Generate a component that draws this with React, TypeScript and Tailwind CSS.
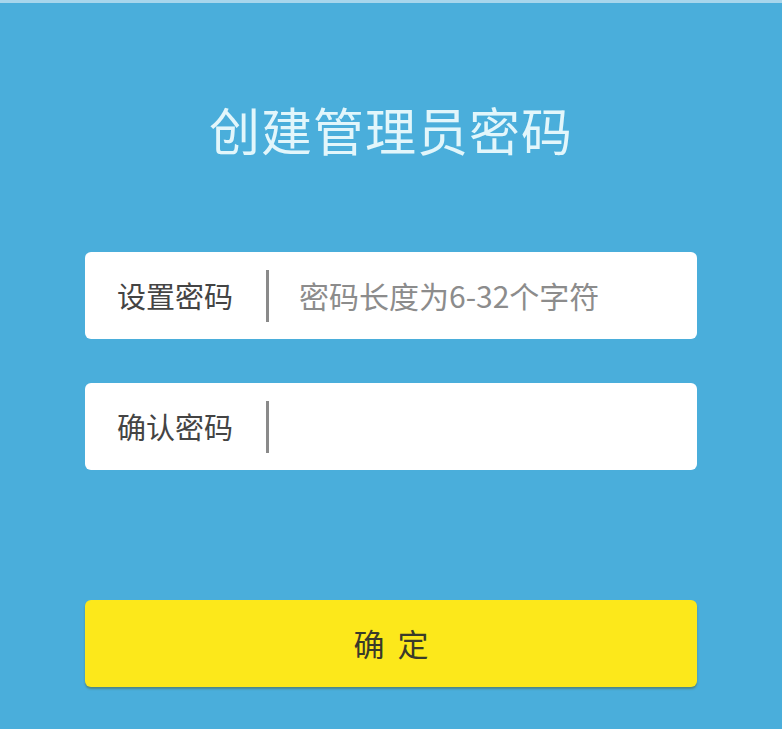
import React from "react";

export default function App() {
  const font = { fontFamily: '"Noto Sans CJK SC", "Noto Sans", sans-serif' };
  return (
    <div
      style={font}
      className="w-[782px] h-[729px] bg-[#4aaedb] border-t-[3px] border-[#a8d6ec] flex flex-col px-[85px] pt-[96px] overflow-hidden"
    >
      <h1 className="text-center text-[51px] leading-[60px] font-normal text-[#e2f6fb] tracking-[1px]">
        创建管理员密码
      </h1>
      <div className="mt-[93px] h-[87px] bg-white rounded-[6px] flex items-center pl-[32px]">
        <span className="text-[29px] text-[#444444] w-[118px] shrink-0 whitespace-nowrap">设置密码</span>
        <span className="ml-[31px] w-[3px] h-[52px] bg-[#8a8a8a] shrink-0" />
        <input
          type="password"
          placeholder="密码长度为6-32个字符"
          style={font}
          className="ml-[30px] flex-1 min-w-0 bg-transparent outline-none text-[30px] text-[#444] placeholder:text-[#8c8c8c]"
        />
      </div>
      <div className="mt-[44px] h-[87px] bg-white rounded-[6px] flex items-center pl-[32px]">
        <span className="text-[29px] text-[#444444] w-[118px] shrink-0 whitespace-nowrap">确认密码</span>
        <span className="ml-[31px] w-[3px] h-[52px] bg-[#8a8a8a] shrink-0" />
        <input
          type="password"
          style={font}
          className="ml-[30px] flex-1 min-w-0 bg-transparent outline-none text-[30px] text-[#444]"
        />
      </div>
      <button
        style={font}
        className="mt-[130px] h-[87px] bg-[#fce81b] rounded-[6px] shadow-[0_2px_2px_rgba(80,90,40,0.45)] text-[31px] text-[#3a3a2a] tracking-[3px] pl-[3px]"
      >
        确 定
      </button>
    </div>
  );
}
